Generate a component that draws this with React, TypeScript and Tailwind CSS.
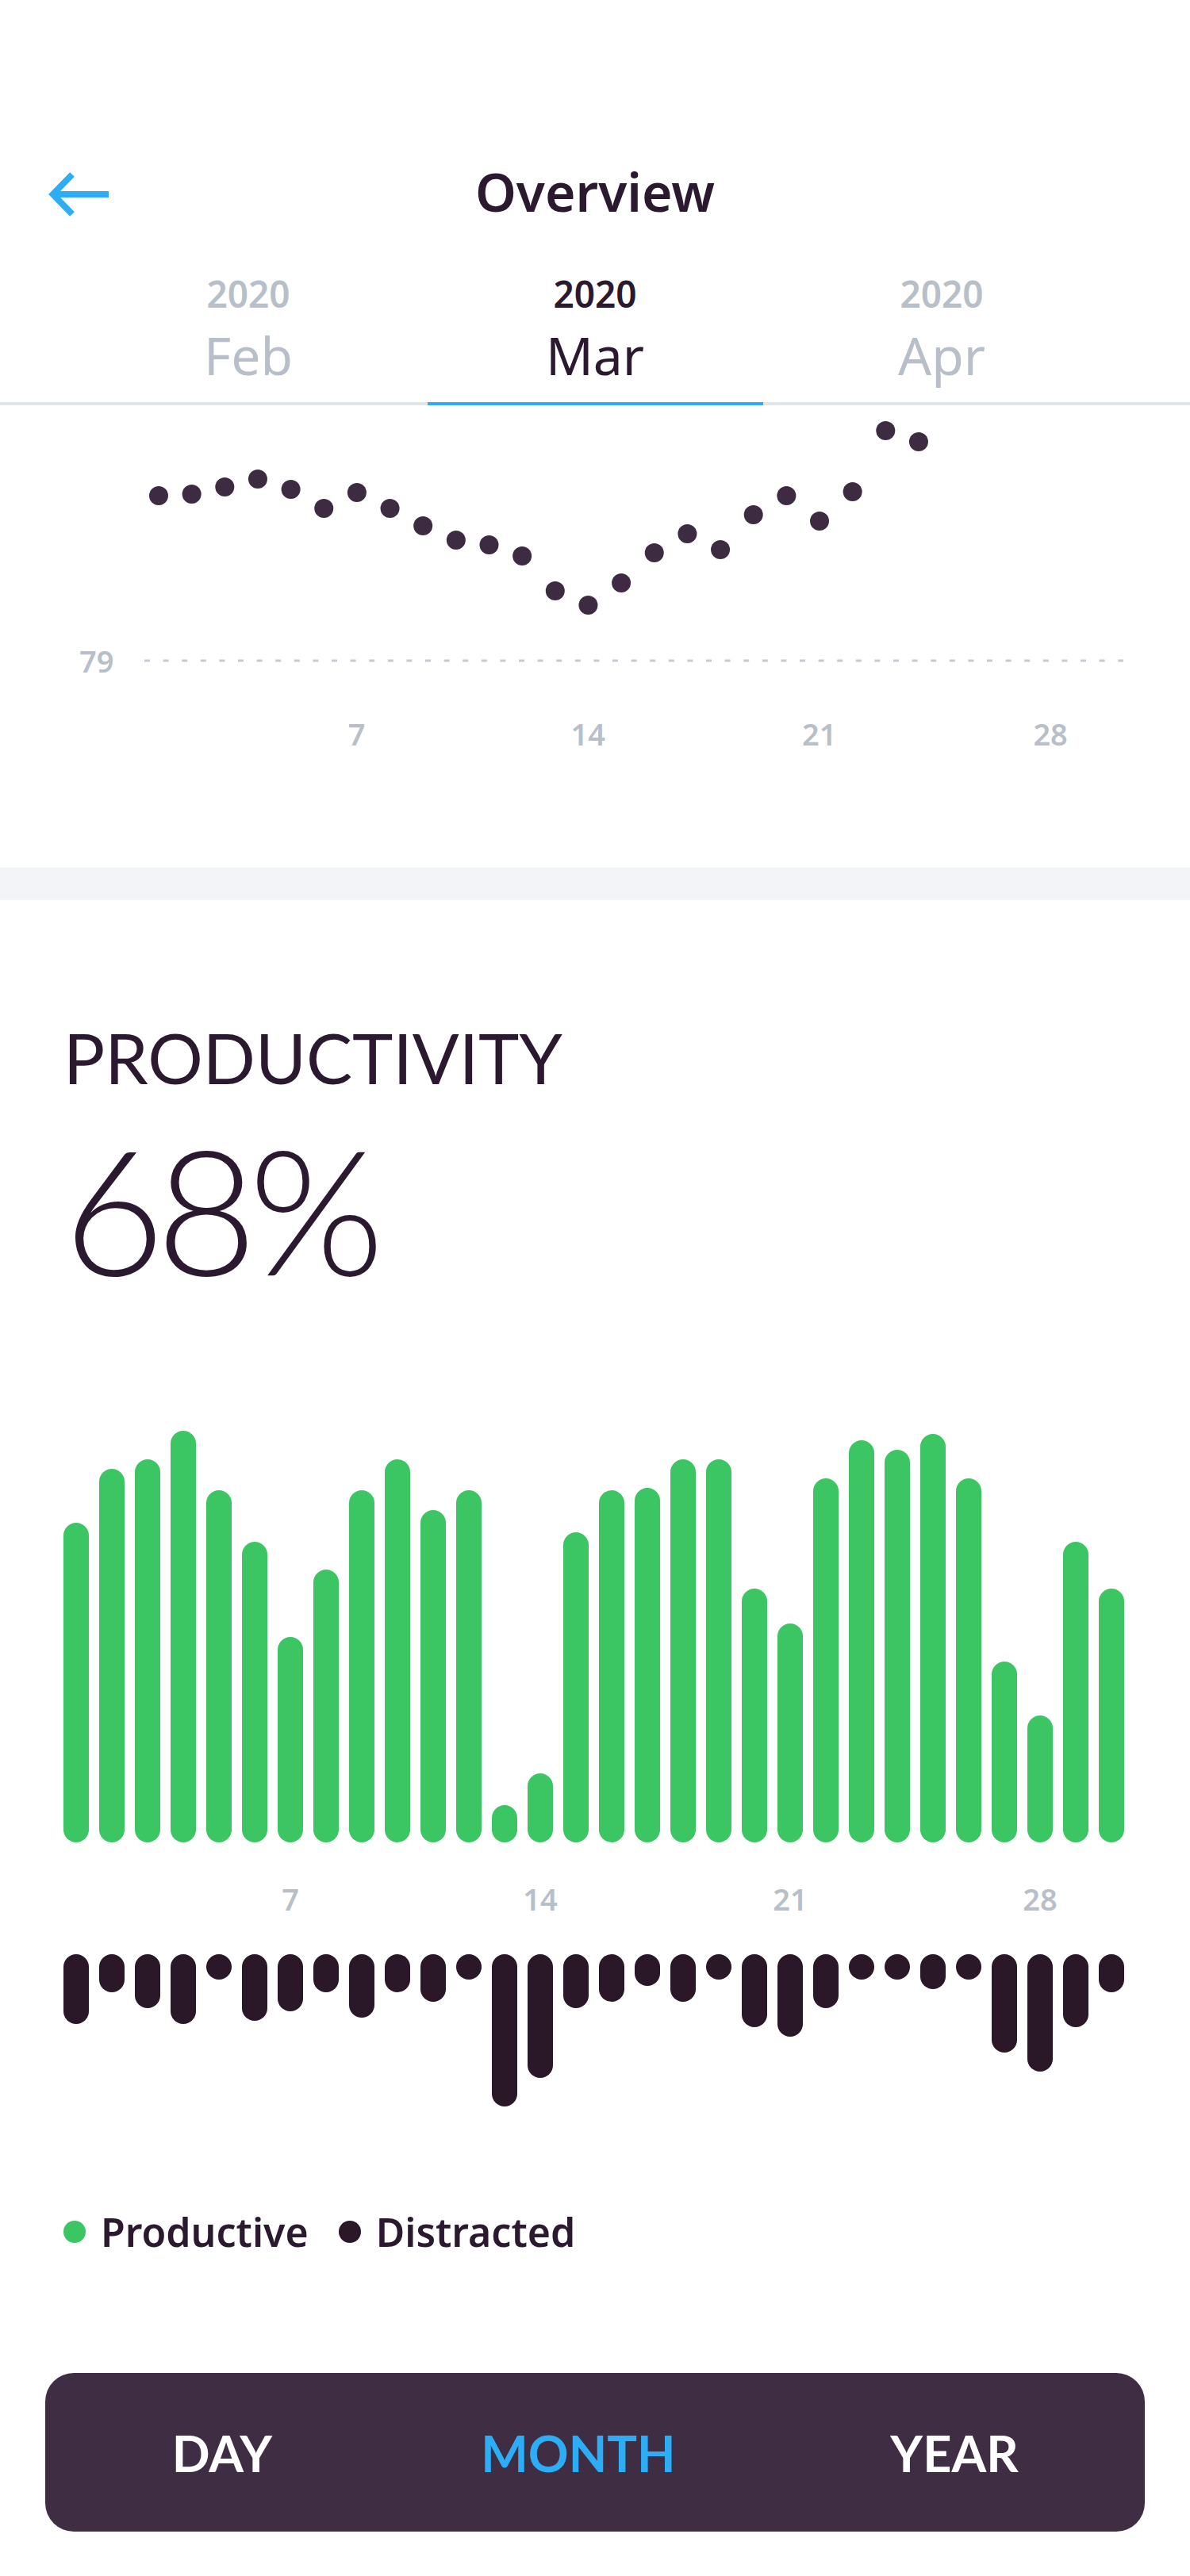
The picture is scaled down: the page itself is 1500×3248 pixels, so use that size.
import React from "react";

const dotY = [626, 624, 615, 605, 618, 642, 622, 642, 664, 682, 688, 702, 746, 764, 736, 698, 674, 694, 650, 626, 658, 621, 544, 558];

const productive = [403, 471, 483, 519, 444, 379, 259, 344, 444, 483, 419, 444, 47, 87, 391, 444, 447, 483, 483, 320, 276, 459, 507, 495, 515, 459, 228, 160, 379, 320];

const distracted = [88, 48, 68, 88, 32, 84, 72, 48, 80, 48, 60, 32, 192, 156, 68, 60, 40, 60, 32, 92, 104, 68, 32, 32, 44, 32, 124, 148, 92, 48];

const tabs = [
  { year: "2020", month: "Feb", active: false },
  { year: "2020", month: "Mar", active: true },
  { year: "2020", month: "Apr", active: false },
];

function BackArrow() {
  return (
    <svg width="90" height="66" viewBox="0 0 90 66" className="ml-[56px]">
      <path
        d="M35 12 L10.7 37 L35 62 M10.7 37 H81"
        fill="none"
        stroke="#2dadf6"
        strokeWidth="8"
        strokeLinejoin="miter"
        strokeLinecap="butt"
      />
    </svg>
  );
}

export default function App() {
  return (
    <div className="w-[1500px] min-h-[3248px] bg-white font-['Noto_Sans',sans-serif] text-[#2b1a2f]">
      {/* header */}
      <div className="pt-[208px] grid grid-cols-[1fr_auto_1fr] items-start">
        <BackArrow />
        <h1 className="text-[66px] leading-none font-semibold">Overview</h1>
        <div />
      </div>

      {/* month tabs */}
      <div className="mt-[73px] flex justify-center">
        {tabs.map((t) => (
          <div key={t.month} className="w-[437px] flex flex-col items-center">
            <span className={`text-[46px] leading-none font-semibold ${t.active ? "text-[#2b1a2f]" : "text-[#b8bfc8]"}`}>
              {t.year}
            </span>
            <span className={`mt-[21px] text-[66px] leading-none ${t.active ? "text-[#2b1a2f]" : "text-[#b8bfc8]"}`}>
              {t.month}
            </span>
          </div>
        ))}
      </div>
      <div className="mt-[27px] h-[4px] bg-[#e1e6e9] flex justify-center">
        <div className="w-[437px] flex">
          <div className="flex-1 mx-[7px] bg-[#2dadf6]" />
        </div>
      </div>

      {/* dot chart */}
      <div className="h-[583px]">
        <svg width="1500" height="300" className="block">
          {dotY.map((y, i) => (
            <circle key={i} cx={200 + i * 41.65} cy={y - 512} r="12" fill="#3d2b42" />
          ))}
        </svg>
        <div className="h-[44px] flex items-center">
          <span className="ml-[100px] text-[38px] leading-none font-semibold text-[#b8bfc8]">79</span>
          <svg width="1234" height="4" className="ml-[39px]">
            <line x1="0" y1="2" x2="1234" y2="2" stroke="#c5cbd2" strokeWidth="3" strokeDasharray="7 16.6" />
          </svg>
        </div>
        <div className="mt-[48px] h-[44px] flex items-center pl-[179px]">
          {dotY.concat([0, 0, 0, 0]).map((_, i) => (
            <div key={i} className="w-[41.65px] shrink-0 flex justify-center">
              {(i + 1) % 7 === 0 && (
                <span className="text-[38px] leading-none font-semibold text-[#b8bfc8] whitespace-nowrap">{i + 1}</span>
              )}
            </div>
          ))}
        </div>
      </div>

      <div className="h-[41px] bg-[#f3f4f7]" />

      {/* productivity */}
      <div className="pl-[80px] pt-[155px] font-['Lato',sans-serif]">
        <h2 className="text-[87px] leading-none font-normal">PRODUCTIVITY</h2>
        <p className="mt-[36px] text-[220px] leading-none font-light tracking-[-11px]">68%</p>
      </div>

      <div className="mt-[167px] h-[523px] px-[80px] flex items-end gap-[13px]">
        {productive.map((h, i) => (
          <div key={i} className="w-[32px] shrink-0 rounded-full bg-[#3cc663]" style={{ height: h }} />
        ))}
      </div>

      <div className="mt-[49px] h-[44px] px-[80px] flex items-center gap-[13px]">
        {productive.map((_, i) => (
          <div key={i} className="w-[32px] shrink-0 flex justify-center">
            {(i + 1) % 7 === 0 && (
              <span className="text-[38px] leading-none font-semibold text-[#b8bfc8] whitespace-nowrap">{i + 1}</span>
            )}
          </div>
        ))}
      </div>

      <div className="mt-[48px] h-[192px] px-[80px] flex items-start gap-[13px]">
        {distracted.map((h, i) => (
          <div key={i} className="w-[32px] shrink-0 rounded-full bg-[#2a1829]" style={{ height: h }} />
        ))}
      </div>

      {/* legend */}
      <div className="mt-[130px] h-[56px] pl-[80px] flex items-center">
        <span className="w-[28px] h-[28px] rounded-full bg-[#3cc663]" />
        <span className="ml-[19px] text-[50px] leading-none font-semibold">Productive</span>
        <span className="ml-[38px] w-[28px] h-[28px] rounded-full bg-[#2a1829]" />
        <span className="ml-[19px] text-[50px] leading-none font-semibold">Distracted</span>
      </div>

      {/* period switch */}
      <div className="mt-[150px] mx-[57px] h-[200px] rounded-[36px] bg-[#3e2d43] grid grid-cols-[446px_452px_1fr] items-center font-['Lato',sans-serif] font-bold text-[63px] leading-none">
        <span className="text-center text-white">DAY</span>
        <span className="text-center text-[#2dadf6]">MONTH</span>
        <span className="text-center text-white pl-[8px]">YEAR</span>
      </div>
      <div className="h-[56px]" />
    </div>
  );
}
